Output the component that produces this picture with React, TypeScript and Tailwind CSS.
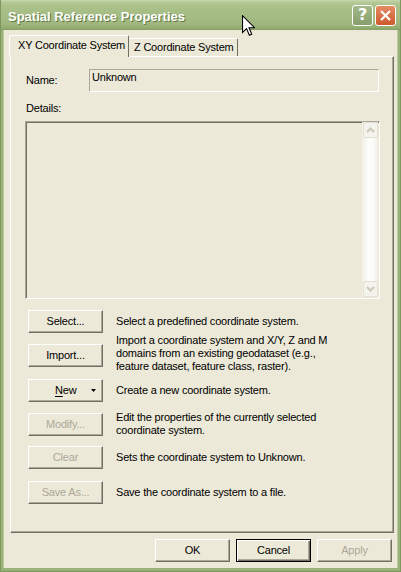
import React from "react";

const btnBase =
  "w-[75px] h-[23px] shrink-0 flex items-center justify-center bg-[#ece9d8] border border-t-white border-l-white border-r-[#716f64] border-b-[#716f64] shadow-[inset_-1px_-1px_0_#aca899]";

function Btn({
  children,
  disabled,
  isDefault,
  className = "",
}: {
  children: React.ReactNode;
  disabled?: boolean;
  isDefault?: boolean;
  className?: string;
}) {
  if (isDefault) {
    return (
      <div
        className={
          "w-[75px] h-[23px] shrink-0 flex items-center justify-center bg-[#ece9d8] border border-black shadow-[inset_1px_1px_0_#ffffff,inset_-1px_-1px_0_#716f64,inset_-2px_-2px_0_#aca899] " +
          className
        }
      >
        {children}
      </div>
    );
  }
  return (
    <div className={btnBase + " " + (disabled ? "text-[#aca899] " : "text-black ") + className}>
      {children}
    </div>
  );
}

function Chevron({ up }: { up?: boolean }) {
  return (
    <svg width="9" height="6" viewBox="0 0 9 6">
      <path
        d={up ? "M1 5 L4.5 1.5 L8 5" : "M1 1 L4.5 4.5 L8 1"}
        fill="none"
        stroke="#cac8bb"
        strokeWidth="2"
      />
    </svg>
  );
}

export default function App() {
  return (
    <div className="w-[401px] h-[572px] relative flex flex-col bg-[#9ab27a] border-l border-r border-b border-[#7d985c] font-['Liberation_Sans',Arial,sans-serif] text-[11px] leading-[13px] tracking-[-0.2px] text-black overflow-hidden select-none">
      {/* Title bar */}
      <div className="h-[30px] shrink-0 -mx-px flex items-center pl-[8px] pt-[2px] bg-[linear-gradient(to_bottom,#c9d8b0_0px,#b6ca98_2px,#aac18a_6px,#a5bc84_16px,#9fb77e_24px,#93ad71_28px,#849f62_30px)]">
        <span className="text-white font-bold text-[13px] leading-[15px] tracking-[0px] [text-shadow:1px_1px_0_#62793f]">
          Spatial Reference Properties
        </span>
        <div className="ml-auto mr-[5px] flex gap-[2px] -mt-[2px]">
          <div className="w-[21px] h-[21px] rounded-[3px] border border-white bg-[linear-gradient(to_bottom,#a2b98a,#879f6b)] flex items-center justify-center text-white font-bold text-[16px] leading-none font-['DejaVu_Sans',sans-serif]">
            ?
          </div>
          <div className="w-[21px] h-[21px] rounded-[3px] border border-white bg-[linear-gradient(to_bottom,#e58a62,#cc5a2e)] flex items-center justify-center">
            <svg width="11" height="11" viewBox="0 0 11 11">
              <path d="M1 1 L10 10 M10 1 L1 10" stroke="white" strokeWidth="2.2" />
            </svg>
          </div>
        </div>
      </div>

      {/* Body */}
      <div className="flex-1 mx-[3px] mb-[3px] bg-[#ece9d8] flex flex-col pt-[5px] shadow-[-1px_0_0_#b8cb9e,1px_0_0_#b8cb9e]">
        {/* Tabs */}
        <div className="h-[21px] flex items-start ml-[5px]">
          <div className="relative z-10 w-[120px] h-[22px] bg-[#ece9d8] border-t border-l border-white border-r border-r-[#716f64] rounded-t-[2px] pl-[8px] pt-[3px] whitespace-nowrap">
            XY Coordinate System
          </div>
          <div className="mt-[3px] w-[109px] h-[18px] bg-[#ece9d8] border-t border-white border-r border-r-[#716f64] rounded-tr-[2px] pl-[5px] pt-[2px] whitespace-nowrap">
            Z Coordinate System
          </div>
        </div>

        {/* Panel */}
        <div className="ml-[6px] w-[384px] h-[477px] shrink-0 border border-t-white border-l-white border-r-[#716f64] border-b-[#716f64] shadow-[inset_-1px_-1px_0_#aca899] flex flex-col">
          <div className="mt-[12px] h-[23px] flex items-center">
            <div className="ml-[15px] w-[63px]">Name:</div>
            <div className="w-[290px] h-[23px] border border-t-[#aca899] border-l-[#aca899] border-r-white border-b-white pl-[2px] pt-[1px]">
              Unknown
            </div>
          </div>

          <div className="mt-[10px] ml-[15px]">Details:</div>

          <div className="mt-[6px] ml-[14px] w-[355px] h-[178px] border border-t-[#aca899] border-l-[#aca899] border-r-white border-b-white shadow-[inset_1px_1px_0_#716f64] flex justify-end pr-[1px] pb-[1px]">
            <div className="w-[16px] flex flex-col justify-between bg-[linear-gradient(to_right,#f1efe6,#fdfdfb_40%,#fbfbf8_70%,#eeece3)]">
              <div className="h-[16px] w-[15px] ml-px rounded-[2px] border border-[#e3e0d3] bg-[#f3f2ec] flex items-center justify-center">
                <Chevron up />
              </div>
              <div className="h-[16px] w-[15px] ml-px rounded-[2px] border border-[#e3e0d3] bg-[#f3f2ec] flex items-center justify-center">
                <Chevron />
              </div>
            </div>
          </div>

          <div className="ml-[17px] flex flex-col">
            <div className="mt-[11px] flex items-center">
              <Btn>Select...</Btn>
              <div className="ml-[13px]">Select a predefined coordinate system.</div>
            </div>
            <div className="mt-[1px] flex items-start">
              <Btn className="mt-[10px]">Import...</Btn>
              <div className="ml-[13px] w-[218px]">
                Import a coordinate system and X/Y, Z and M domains from an existing geodataset (e.g., feature dataset, feature class, raster).
              </div>
            </div>
            <div className="mt-[6px] flex items-center">
              <Btn>
                <div className="w-full flex items-center">
                  <span className="ml-[26px]">
                    <span className="underline underline-offset-2">N</span>ew
                  </span>
                  <svg className="ml-[15px]" width="5" height="3" viewBox="0 0 5 3">
                    <path d="M0 0 H5 L2.5 3 Z" fill="black" />
                  </svg>
                </div>
              </Btn>
              <div className="ml-[13px]">Create a new coordinate system.</div>
            </div>
            <div className="mt-[9px] h-[26px] flex items-center">
              <Btn disabled>Modify...</Btn>
              <div className="ml-[13px] w-[218px]">
                Edit the properties of the currently selected coordinate system.
              </div>
            </div>
            <div className="mt-[9px] flex items-center">
              <Btn disabled>Clear</Btn>
              <div className="ml-[13px]">Sets the coordinate system to Unknown.</div>
            </div>
            <div className="mt-[12px] flex items-center">
              <Btn disabled>Save As...</Btn>
              <div className="ml-[13px]">Save the coordinate system to a file.</div>
            </div>
          </div>
        </div>

        {/* Bottom buttons */}
        <div className="mt-[6px] flex justify-end gap-[6px] pr-[5px]">
          <Btn>OK</Btn>
          <Btn isDefault>Cancel</Btn>
          <Btn disabled>Apply</Btn>
        </div>
      </div>

      {/* Mouse cursor */}
      <svg
        className="absolute left-[241px] top-[15px]"
        width="13"
        height="22"
        viewBox="0 0 12 20"
      >
        <path
          d="M0.5 0.5 L0.5 16 L4.2 12.4 L6.8 18.6 L9 17.6 L6.5 11.6 L11.5 11.6 Z"
          fill="white"
          stroke="black"
          strokeWidth="1"
          strokeLinejoin="miter"
        />
      </svg>
    </div>
  );
}
